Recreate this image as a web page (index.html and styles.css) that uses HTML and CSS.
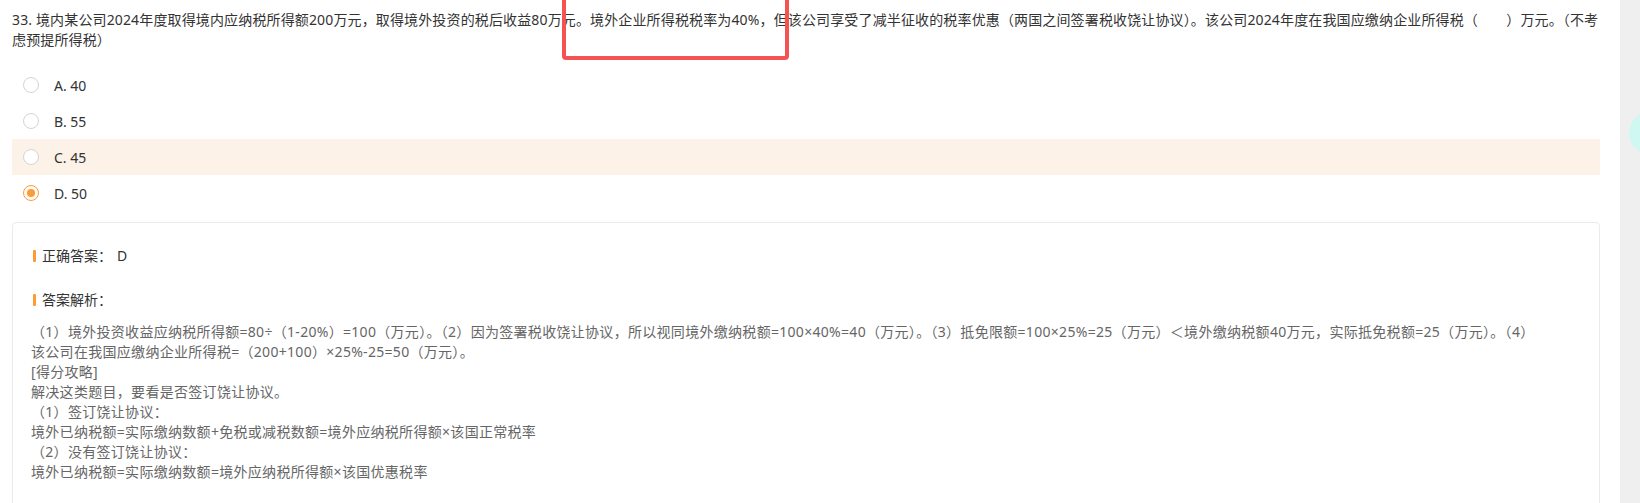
FILE: index.html
```html
<!DOCTYPE html>
<html lang="zh-CN">
<head>
<meta charset="utf-8">
<title>33题</title>
<link rel="stylesheet" href="styles.css">
</head>
<body>
<div class="page">
  <main class="panel">
    <div class="question">33. 境内某公司2024年度取得境内应纳税所得额200万元，取得境外投资的税后收益80万元。境外企业所得税税率为40%，但该公司享受了减半征收的税率优惠（两国之间签署税收饶让协议）。该公司2024年度在我国应缴纳企业所得税（&emsp;&emsp;）万元。（不考<br>虑预提所得税）</div>
    <ul class="options">
      <li class="option"><span class="radio"></span><span class="label">A. 40</span></li>
      <li class="option"><span class="radio"></span><span class="label">B. 55</span></li>
      <li class="option option-hover"><span class="radio"></span><span class="label">C. 45</span></li>
      <li class="option"><span class="radio radio-on"></span><span class="label">D. 50</span></li>
    </ul>
    <section class="card">
      <div class="title"><span class="bar"></span>正确答案：<span class="answer">D</span></div>
      <div class="title title-2"><span class="bar"></span>答案解析：</div>
      <div class="analysis">
        <p>（1）境外投资收益应纳税所得额=80÷（1-20%）=100（万元）。（2）因为签署税收饶让协议，所以视同境外缴纳税额=100×40%=40（万元）。（3）抵免限额=100×25%=25（万元）＜境外缴纳税额40万元，实际抵免税额=25（万元）。（4）<br>该公司在我国应缴纳企业所得税=（200+100）×25%-25=50（万元）。</p>
        <p>[得分攻略]</p>
        <p>解决这类题目，要看是否签订饶让协议。</p>
        <p>（1）签订饶让协议：</p>
        <p>境外已纳税额=实际缴纳数额+免税或减税数额=境外应纳税所得额×该国正常税率</p>
        <p>（2）没有签订饶让协议：</p>
        <p>境外已纳税额=实际缴纳数额=境外应纳税所得额×该国优惠税率</p>
      </div>
    </section>
  </main>
  <div class="mark"></div>
  <div class="float-ball"></div>
</div>
</body>
</html>
```
FILE: styles.css
```css
html, body {
  margin: 0;
  padding: 0;
}
body {
  background: #efefef;
  font-family: "Noto Sans", "Noto Sans CJK SC", sans-serif;
  font-size: 14px;
  color: #333;
  overflow: hidden;
}
.page {
  position: relative;
  width: 1640px;
  height: 503px;
  overflow: hidden;
}
.panel {
  width: 1620px;
  height: 503px;
  box-sizing: border-box;
  background: #fff;
  padding: 10px 20px 0 12px;
}
.question {
  line-height: 20px;
  letter-spacing: 0.14px;
  color: #333;
}
.options {
  list-style: none;
  margin: 17px 0 0;
  padding: 0;
}
.option {
  display: flex;
  align-items: center;
  height: 36px;
  padding-left: 11px;
  color: #333;
}
.option-hover {
  background: #fcf2e8;
}
.radio {
  width: 16px;
  height: 16px;
  box-sizing: border-box;
  border: 1px solid #d4d4d4;
  border-radius: 50%;
  background: #fff;
  display: flex;
  align-items: center;
  justify-content: center;
  margin-right: 15px;
}
.radio-on {
  border-color: #ff9b35;
}
.radio-on::after {
  content: "";
  width: 8px;
  height: 8px;
  border-radius: 50%;
  background: #ff9b35;
}
.card {
  margin-top: 11px;
  border: 1px solid #ebebeb;
  border-radius: 4px;
  height: 400px;
  padding: 23px 20px 0 18px;
}
.title {
  display: flex;
  align-items: center;
  height: 20px;
  line-height: 20px;
  color: #333;
}
.title-2 {
  margin-top: 24px;
}
.bar {
  width: 3px;
  height: 12px;
  border-radius: 1px;
  background: #ff9b35;
  margin: 0 6px 0 2px;
}
.answer {
  margin-left: 5px;
}
.analysis {
  margin-top: 12px;
  color: #666;
  line-height: 20px;
  letter-spacing: 0.3px;
}
.analysis p {
  margin: 0;
}
.mark {
  position: absolute;
  left: 562px;
  top: -10px;
  width: 227px;
  height: 70px;
  box-sizing: border-box;
  border: 4px solid #f55353;
  border-radius: 4px;
}
.float-ball {
  position: absolute;
  left: 1629px;
  top: 111px;
  width: 44px;
  height: 44px;
  border-radius: 50%;
  background: #cff8f3;
}
```
